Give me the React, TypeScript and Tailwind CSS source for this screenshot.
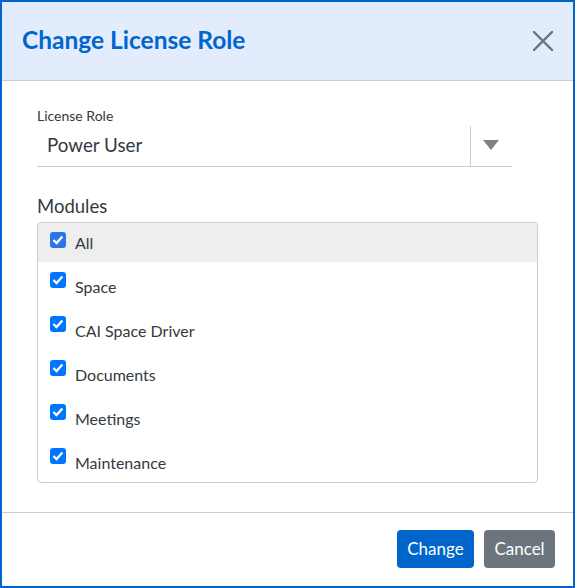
const modules = ["Space", "CAI Space Driver", "Documents", "Meetings", "Maintenance"]

function CheckBox({ muted }: { muted?: boolean }) {
  return (
    <span className={`flex h-[16px] w-[16px] shrink-0 items-center justify-center rounded-[3px] ${muted ? "bg-[#2a76e8]" : "bg-[#0075ff]"}`}>
      <svg viewBox="0 0 16 16" className="h-[16px] w-[16px]" fill="none">
        <path d="M3.4 8 6.5 11 12.4 4.4" stroke="#fff" strokeWidth="2.3" />
      </svg>
    </span>
  )
}

export default function App() {
  return (
    <div className="flex h-[588px] w-[575px] flex-col border-2 border-[#0066cc] bg-white font-['Lato','Noto_Sans',sans-serif] text-[#343a40]">
      {/* Header */}
      <div className="flex h-[79px] shrink-0 items-center justify-between border-b border-[#cccccc] bg-[#e2ecfd] pl-[20px] pr-[20px]">
        <h1 className="pb-[2px] text-[24.5px] font-bold text-[#0066cc]">Change License Role</h1>
        <svg viewBox="0 0 20 20" className="h-[20px] w-[20px]" fill="none">
          <path d="M0.8 0.8 19.2 19.2M19.2 0.8 0.8 19.2" stroke="#6c757d" strokeWidth="2.3" strokeLinecap="round" />
        </svg>
      </div>

      {/* Body */}
      <div className="flex-1 pl-[35px] pr-[35px] pt-[26px]">
        <label className="mb-[1px] block text-[14px] leading-[18px]">License Role</label>
        <div className="flex h-[41px] w-[475px] items-center border-b border-[#cccccc]">
          <span className="-mt-[2px] flex-1 pl-[10px] text-[18.8px]">Power User</span>
          <div className="flex h-full w-[42px] items-center justify-center border-l border-[#cccccc]">
            <span className="mb-[2px] mr-[1px] h-0 w-0 border-x-[8px] border-t-[10px] border-x-transparent border-t-[#808080]" />
          </div>
        </div>

        <div className="mt-[27px] text-[18.5px] leading-[24px]">Modules</div>
        <div className="mt-[4px] h-[261px] overflow-hidden rounded-[4px] border border-[#cccccc]">
          <div className="flex h-[39px] items-start gap-[9px] bg-[#eeeeee] pl-[12px] pt-[9px]">
            <CheckBox muted />
            <span className="mt-[1px] text-[16px] leading-[20px]">All</span>
          </div>
          {modules.map((m) => (
            <div key={m} className="flex h-[44px] items-start gap-[9px] pl-[12px] pt-[10px]">
              <CheckBox />
              <span className="mt-[5px] text-[16px] leading-[20px]">{m}</span>
            </div>
          ))}
        </div>
      </div>

      {/* Footer */}
      <div className="flex h-[74px] shrink-0 items-start justify-end gap-[10px] border-t border-[#cccccc] pr-[18px] pt-[17px]">
        <button className="flex h-[38px] w-[77px] items-center justify-center rounded-[4px] bg-[#0066cc] text-[17px] text-white">Change</button>
        <button className="flex h-[38px] w-[71px] items-center justify-center rounded-[4px] bg-[#6c757d] text-[17px] text-white">Cancel</button>
      </div>
    </div>
  )
}
